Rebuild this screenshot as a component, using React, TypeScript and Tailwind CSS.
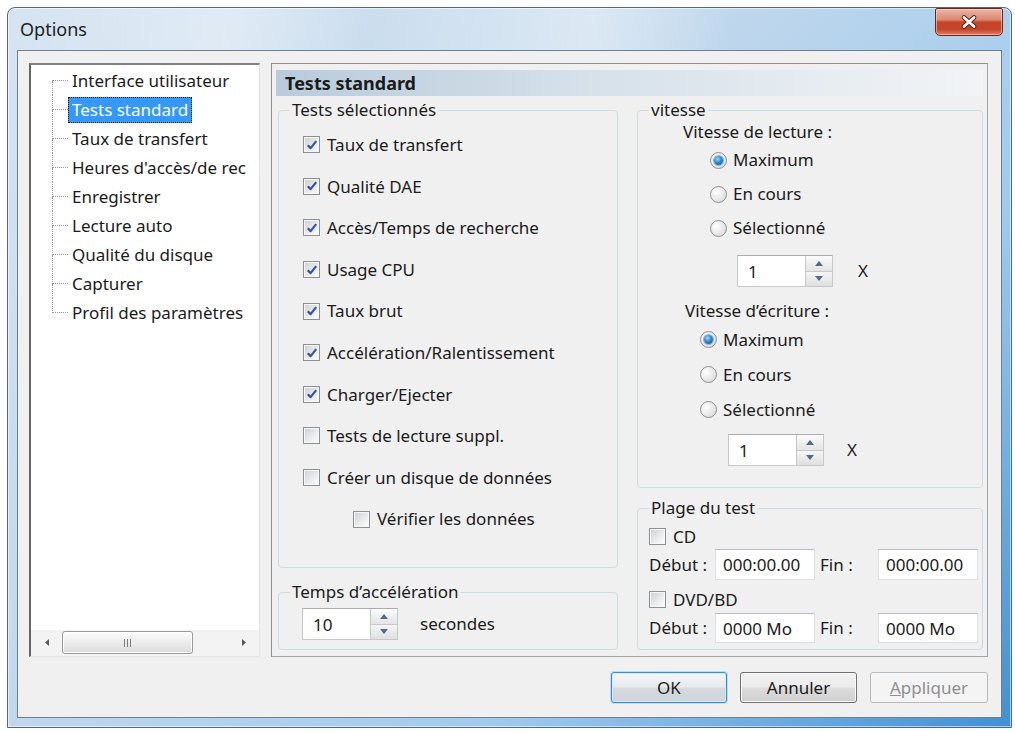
import type { ReactNode } from 'react'

const treeItems = [
  'Interface utilisateur',
  'Tests standard',
  'Taux de transfert',
  "Heures d'accès/de rec",
  'Enregistrer',
  'Lecture auto',
  'Qualité du disque',
  'Capturer',
  'Profil des paramètres',
]

const selectedTests = [
  { label: 'Taux de transfert', checked: true },
  { label: 'Qualité DAE', checked: true },
  { label: 'Accès/Temps de recherche', checked: true },
  { label: 'Usage CPU', checked: true },
  { label: 'Taux brut', checked: true },
  { label: 'Accélération/Ralentissement', checked: true },
  { label: 'Charger/Ejecter', checked: true },
  { label: 'Tests de lecture suppl.', checked: false },
  { label: 'Créer un disque de données', checked: false },
]

function CheckBox({ checked = false }: { checked?: boolean }) {
  return (
    <span className="flex h-[17px] w-[17px] shrink-0 items-center justify-center border border-[#8e8f8f] bg-[linear-gradient(135deg,#cbced3_0%,#e9ebee_55%,#ffffff_100%)] shadow-[inset_0_0_0_1px_#f7f7f7]">
      {checked ? (
        <svg viewBox="0 0 16 16" className="h-[14px] w-[14px]" aria-hidden="true">
          <path d="M3.2 8.2 6.4 11.6 12.8 3.6" fill="none" stroke="#3853ad" strokeWidth="2.6" strokeLinejoin="round" />
        </svg>
      ) : null}
    </span>
  )
}

function Radio({ checked = false }: { checked?: boolean }) {
  return (
    <span className="flex h-[17px] w-[17px] shrink-0 items-center justify-center rounded-full border border-[#8e8f8f] bg-[radial-gradient(circle_at_35%_35%,#ffffff_0%,#e3e3e3_65%,#c9c9c9_100%)]">
      {checked ? (
        <span className="h-[9px] w-[9px] rounded-full bg-[radial-gradient(circle_at_40%_35%,#a6dcff_0%,#2b88cc_45%,#0b4985_100%)] shadow-[0_0_0_1px_#86b8df]" />
      ) : null}
    </span>
  )
}

function SpinArrow({ up }: { up?: boolean }) {
  return (
    <svg viewBox="0 0 8 5" className="h-[5px] w-[8px]" aria-hidden="true">
      <path d={up ? 'M0 5 4 0 8 5Z' : 'M0 0 4 5 8 0Z'} fill="#4e6a8e" />
    </svg>
  )
}

function Spin({ value }: { value: string }) {
  return (
    <div className="flex h-[32px] w-[96px] border border-[#c6c8cc] border-t-[#abadb3] bg-white">
      <span className="flex flex-1 items-center pl-[10px] leading-none">{value}</span>
      <span className="flex w-[27px] flex-col border-l border-[#c6c8cc]">
        <span className="flex flex-1 items-center justify-center border-b border-[#c6c8cc] bg-[linear-gradient(#fbfbfb,#e4e4e4)]">
          <SpinArrow up />
        </span>
        <span className="flex flex-1 items-center justify-center bg-[linear-gradient(#f6f6f6,#dfdfdf)]">
          <SpinArrow />
        </span>
      </span>
    </div>
  )
}

function TextBox({ value }: { value: string }) {
  return (
    <span className="flex h-full w-[100px] items-center border border-[#dde0e4] border-t-[#b9bcc2] bg-white pl-[7px] leading-none">
      {value}
    </span>
  )
}

function Group({ title, className, children }: { title: string; className: string; children: ReactNode }) {
  return (
    <fieldset className={`min-w-0 rounded-[4px] border border-[#d0dae1] ${className}`}>
      <legend className="ml-[11px] px-[2px] leading-[22px]">{title}</legend>
      {children}
    </fieldset>
  )
}

function Tree() {
  const last = treeItems.length - 1

  return (
    <div className="flex w-[231px] flex-col border-l-2 border-t-2 border-r border-b border-l-[#666666] border-t-[#828282] border-r-[#e3e3e3] border-b-[#e3e3e3] bg-white">
      <div className="flex-1 overflow-hidden pt-[1px]">
        {treeItems.map((item, i) => (
          <div key={item} className="flex h-[29px] items-stretch">
            <div className="ml-[21px] flex w-[16px] shrink-0 flex-col">
              <div
                className={
                  i > 0
                    ? 'h-1/2 border-b border-l border-dotted border-[#9a9a9a]'
                    : 'h-1/2 border-b border-dotted border-[#9a9a9a]'
                }
              />
              <div className={i < last ? 'h-1/2 border-l border-dotted border-[#9a9a9a]' : 'h-1/2'} />
            </div>
            <div className="flex items-center whitespace-nowrap">
              <span
                className={
                  i === 1
                    ? 'h-[26px] bg-[#3399ff] px-[4px] leading-[26px] text-white outline-1 outline-offset-[-1px] outline-dotted outline-[#1a1a1a]'
                    : 'h-[26px] px-[4px] leading-[26px]'
                }
              >
                {item}
              </span>
            </div>
          </div>
        ))}
      </div>
      <div className="flex h-[26px] items-center bg-[#f3f3f3] pb-[1px]">
        <span className="flex w-[31px] justify-center">
          <svg viewBox="0 0 4 7" className="h-[7px] w-[4px]" aria-hidden="true">
            <path d="M4 0 0 3.5 4 7Z" fill="#5a5a5a" />
          </svg>
        </span>
        <div className="flex h-[23px] w-[131px] items-center justify-center gap-[2px] rounded-[3px] border border-[#9b9b9b] bg-[linear-gradient(#fdfdfd,#ececec_50%,#dcdcdc)] shadow-[inset_0_0_0_1px_#ffffff]">
          <span className="h-[8px] w-[1px] bg-[#7c7c7c]" />
          <span className="h-[8px] w-[1px] bg-[#7c7c7c]" />
          <span className="h-[8px] w-[1px] bg-[#7c7c7c]" />
        </div>
        <span className="flex-1" />
        <span className="flex w-[31px] justify-center">
          <svg viewBox="0 0 4 7" className="h-[7px] w-[4px]" aria-hidden="true">
            <path d="M0 0 4 3.5 0 7Z" fill="#5a5a5a" />
          </svg>
        </span>
      </div>
    </div>
  )
}

function SpeedBlock({
  title,
  labelPad,
  radioPad,
  spinPad,
  xGap,
  rowH,
}: {
  title: string
  labelPad: string
  radioPad: string
  spinPad: string
  xGap: string
  rowH: string
}) {
  return (
    <>
      <div className={`flex h-[22px] items-center ${labelPad}`}>{title}</div>
      {['Maximum', 'En cours', 'Sélectionné'].map((label, i) => (
        <div key={label} className={`flex items-center gap-[6px] ${rowH} ${radioPad}`}>
          <Radio checked={i === 0} />
          <span>{label}</span>
        </div>
      ))}
      <div className={`flex items-center ${spinPad}`}>
        <Spin value="1" />
        <span className={xGap}>X</span>
      </div>
    </>
  )
}

function Panel() {
  return (
    <div className="flex w-[717px] flex-col border border-[#a3a3a3] border-l-[#8f8f8f] border-t-[#8f8f8f] bg-[#f0f0f0] px-[4px] pb-[6px] pt-[6px]">
      <div className="flex h-[26px] items-center bg-[linear-gradient(90deg,#b9cbdb_0%,#d6e1ea_45%,#f2f4f6_100%)] pl-[9px] text-[18px] font-bold leading-none">
        Tests standard
      </div>
      <div className="mt-[3px] flex flex-1 gap-[19px] pl-[2px]">
        <div className="flex w-[340px] flex-col gap-[13px]">
          <Group title="Tests sélectionnés" className="flex-1">
            <div className="pl-[24px] pt-[3px]">
              {selectedTests.map((test) => (
                <div key={test.label} className="flex h-[41.6px] items-center gap-[7px]">
                  <CheckBox checked={test.checked} />
                  <span>{test.label}</span>
                </div>
              ))}
              <div className="flex h-[41.6px] items-center gap-[7px] pl-[50px]">
                <CheckBox />
                <span>Vérifier les données</span>
              </div>
            </div>
          </Group>
          <Group title="Temps d’accélération" className="h-[69px]">
            <div className="mt-[5px] flex items-center pl-[23px]">
              <Spin value="10" />
              <span className="ml-[22px]">secondes</span>
            </div>
          </Group>
        </div>
        <div className="flex w-[346px] flex-col gap-[9px]">
          <Group title="vitesse" className="flex-1">
            <div className="flex flex-col">
              <SpeedBlock
                title="Vitesse de lecture :"
                labelPad="pl-[45px]"
                radioPad="pl-[72px]"
                spinPad="mt-[10px] pl-[99px]"
                xGap="ml-[25px]"
                rowH="h-[34px]"
              />
              <div className="mt-[13px]" />
              <SpeedBlock
                title="Vitesse d’écriture :"
                labelPad="pl-[47px]"
                radioPad="pl-[62px]"
                spinPad="mt-[7px] pl-[90px]"
                xGap="ml-[23px]"
                rowH="h-[35px]"
              />
            </div>
          </Group>
          <Group title="Plage du test" className="h-[153px]">
            <div className="flex flex-col pl-[11px]">
              <div className="mt-[5px] flex h-[25px] items-center gap-[7px]">
                <CheckBox />
                <span>CD</span>
              </div>
              <div className="flex h-[31px] items-stretch">
                <span className="flex w-[66px] items-center">Début :</span>
                <TextBox value="000:00.00" />
                <span className="flex w-[63px] items-center pl-[5px]">Fin :</span>
                <TextBox value="000:00.00" />
              </div>
              <div className="mt-[6px] flex h-[27px] items-center gap-[7px]">
                <CheckBox />
                <span>DVD/BD</span>
              </div>
              <div className="flex h-[30px] items-stretch">
                <span className="flex w-[66px] items-center">Début :</span>
                <TextBox value="0000 Mo" />
                <span className="flex w-[63px] items-center pl-[5px]">Fin :</span>
                <TextBox value="0000 Mo" />
              </div>
            </div>
          </Group>
        </div>
      </div>
    </div>
  )
}

function DialogButton({ tone, children }: { tone: 'default' | 'normal' | 'disabled'; children: ReactNode }) {
  if (tone === 'disabled') {
    return (
      <button
        type="button"
        className="flex h-[31px] w-[118px] items-center justify-center rounded-[3px] border border-[#b7babd] bg-[#f4f4f4] text-[#8f8f8f]"
      >
        {children}
      </button>
    )
  }

  return (
    <button
      type="button"
      className={
        tone === 'default'
          ? 'flex h-[31px] w-[116px] items-center justify-center rounded-[3px] border border-[#3c8fc8] bg-[linear-gradient(#f4f6f8_0%,#e8ebee_48%,#d6dadf_52%,#cfd4d9_100%)] shadow-[inset_0_0_0_1px_#c9ecfb,0_0_0_1px_#b5def4]'
          : 'flex h-[31px] w-[117px] items-center justify-center rounded-[3px] border border-[#707070] bg-[linear-gradient(#f2f2f2_0%,#ebebeb_48%,#dddddd_52%,#cfcfcf_100%)] shadow-[inset_0_0_0_1px_#fbfbfb]'
      }
    >
      {children}
    </button>
  )
}

function CloseButton() {
  return (
    <div className="mr-[8px] flex h-[28px] w-[68px] items-center justify-center rounded-b-[5px] rounded-t-[2px] border border-[#6b291d] bg-[linear-gradient(#ecb6a8_0%,#dc8670_42%,#c6452a_50%,#c4442a_78%,#e27c5f_100%)] shadow-[inset_0_0_0_1px_rgba(255,220,210,0.55)]">
      <svg viewBox="0 0 18 14" className="h-[14px] w-[18px]" aria-hidden="true">
        <path d="M4 2.5 14 11.5M14 2.5 4 11.5" stroke="#5b1c12" strokeWidth="4.6" strokeLinecap="round" />
        <path d="M4 2.5 14 11.5M14 2.5 4 11.5" stroke="#ffffff" strokeWidth="2.8" strokeLinecap="round" />
      </svg>
    </div>
  )
}

export default function App() {
  return (
    <div className="min-h-screen bg-white pl-[7px] pt-[7px] font-['Noto_Sans','Open_Sans',sans-serif] text-[17px] text-[#1b1b1b]">
      <div className="flex h-[721px] w-[1005px] flex-col rounded-t-[8px] border border-[#56687a] bg-[linear-gradient(135deg,#d6e4f1_0%,#c2d8ec_40%,#9fcaee_70%,#3f91d4_100%)] shadow-[inset_0_0_0_1px_rgba(255,255,255,0.55)]">
        <div className="flex h-[42px] items-start rounded-t-[8px] bg-[linear-gradient(100deg,rgba(255,255,255,0)_0%,rgba(255,255,255,0.35)_22%,rgba(255,255,255,0)_36%,rgba(255,255,255,0.4)_58%,rgba(255,255,255,0)_72%)]">
          <span className="ml-[12px] self-center text-[18px] leading-[24px] text-[#1e1e1e]">Options</span>
          <div className="flex-1" />
          <CloseButton />
        </div>
        <div className="mx-[9px] mb-[9px] flex flex-1 flex-col border border-[#6f7f8d] bg-[#f0f0f0] pb-[14px] pl-[11px] pr-[13px] pt-[12px]">
          <div className="flex h-[594px] gap-[11px]">
            <Tree />
            <Panel />
          </div>
          <div className="mt-[15px] flex justify-end gap-[13px]">
            <DialogButton tone="default">OK</DialogButton>
            <DialogButton tone="normal">Annuler</DialogButton>
            <DialogButton tone="disabled">
              <span>
                <span className="underline">A</span>ppliquer
              </span>
            </DialogButton>
          </div>
        </div>
      </div>
    </div>
  )
}
